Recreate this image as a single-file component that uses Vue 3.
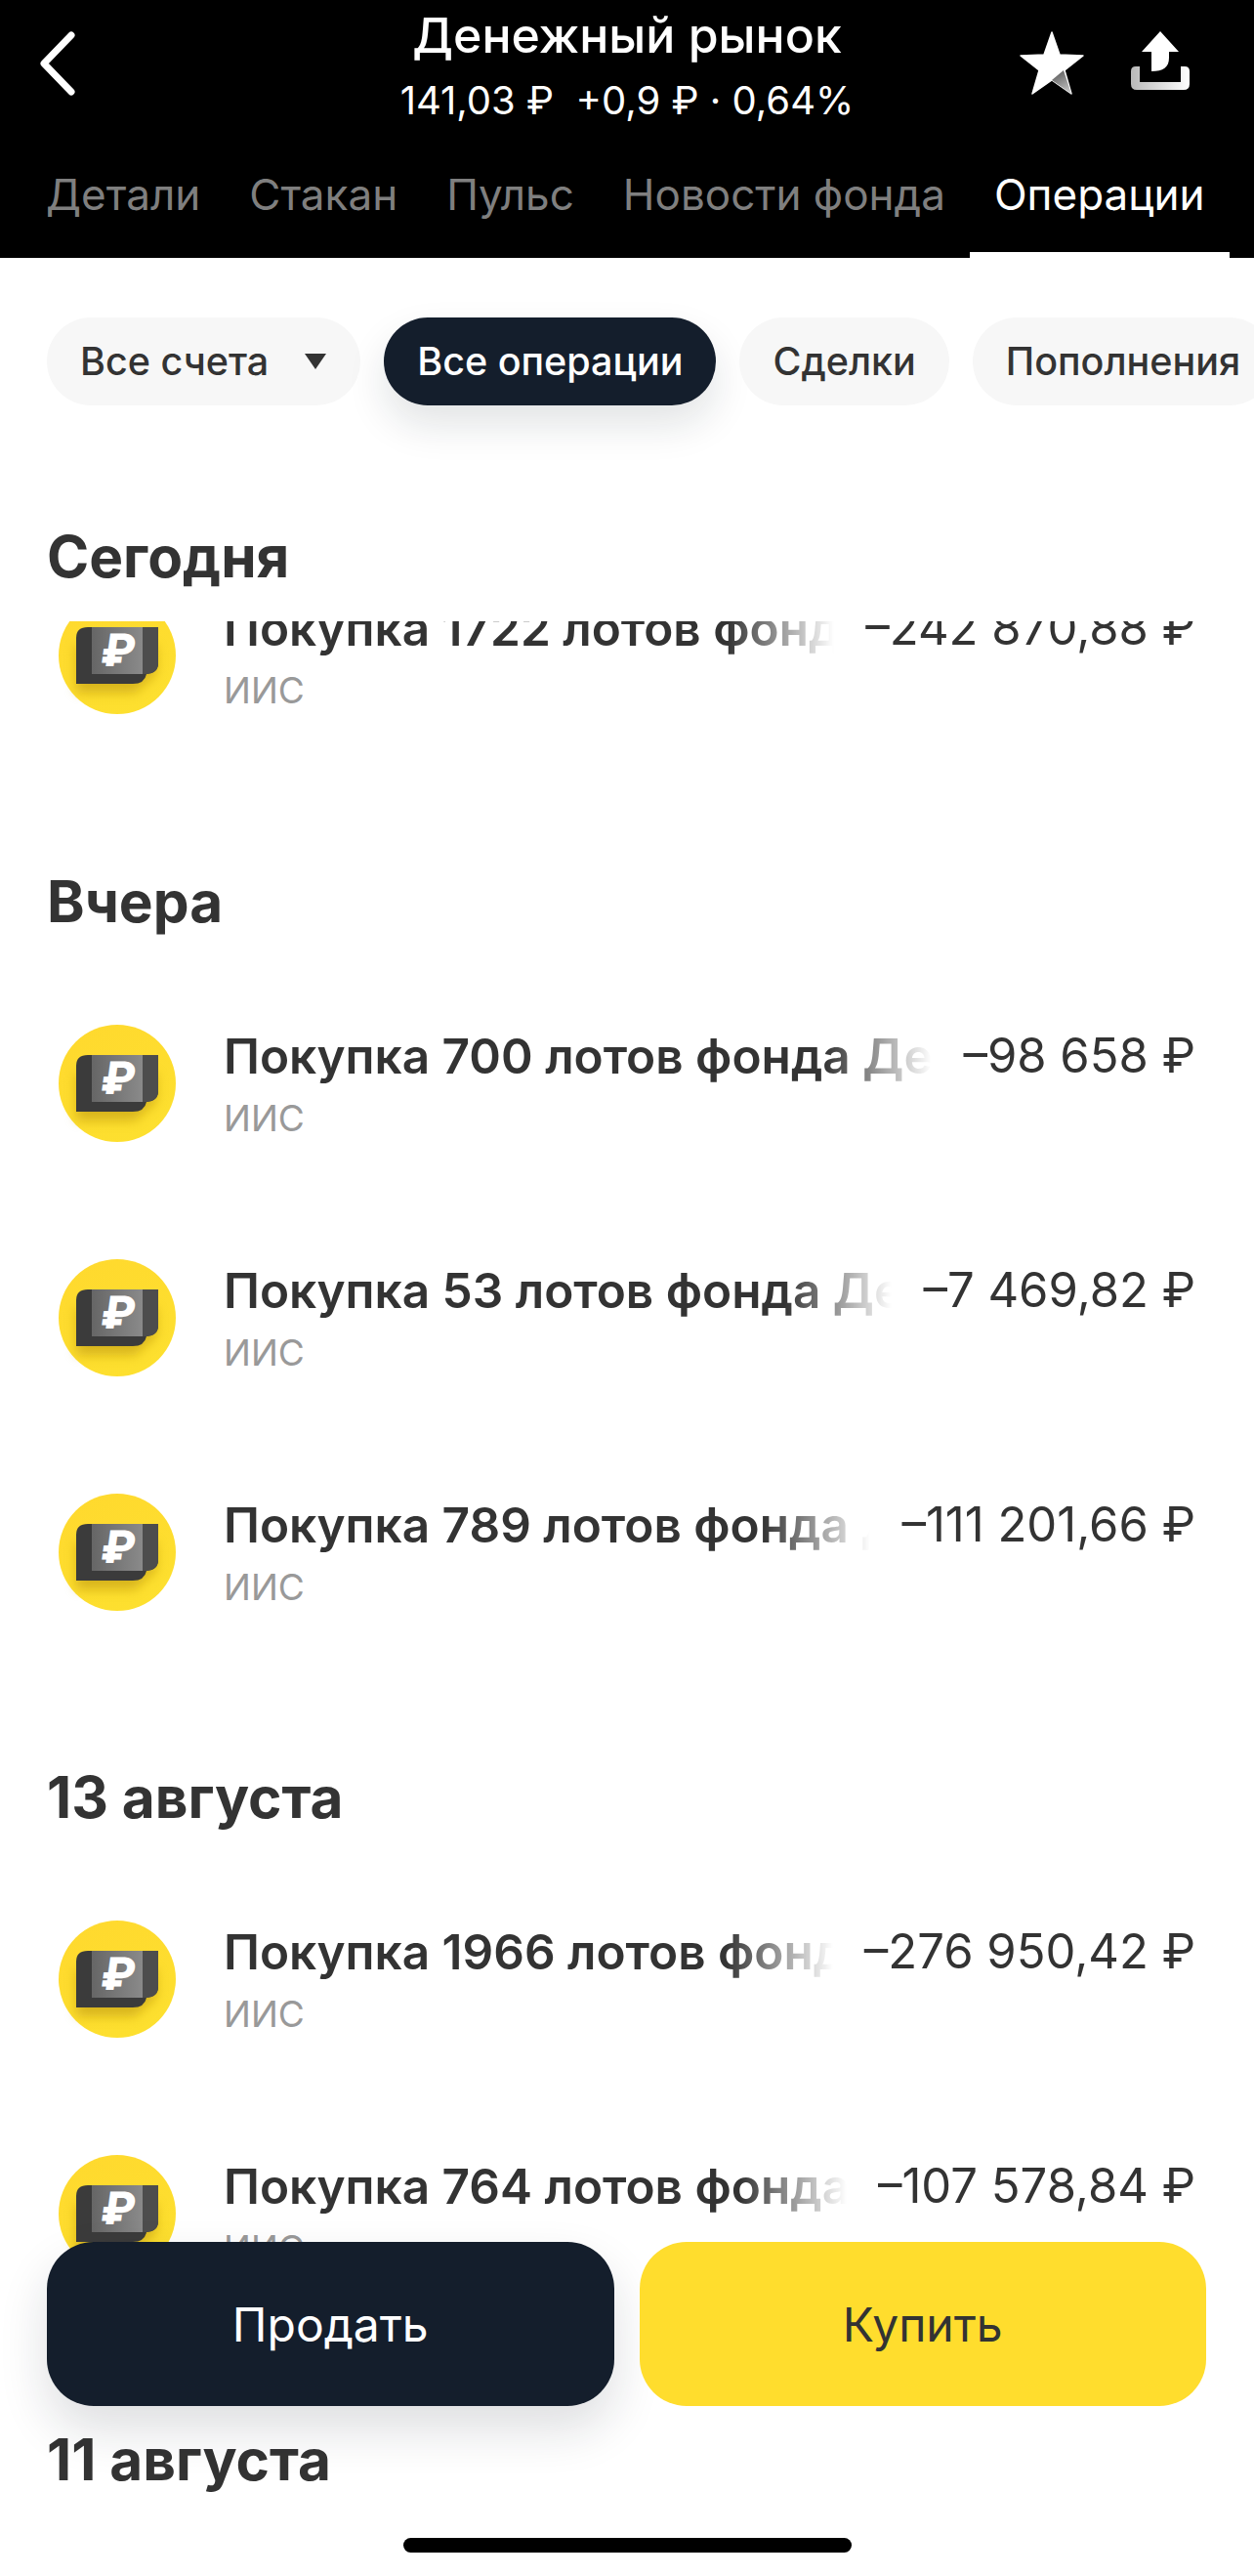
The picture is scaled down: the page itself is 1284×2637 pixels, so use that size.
<template>
  <div class="screen">
    <header class="top">
      <div class="top__bar">
        <button class="top__back" type="button" aria-label="Назад">
          <svg width="40" height="66" viewBox="0 0 40 66">
            <path d="M34 4 L6 33 L34 62" fill="none" stroke="#fff" stroke-width="7" stroke-linecap="round" stroke-linejoin="round" />
          </svg>
        </button>
        <div class="top__center">
          <div class="top__title">Денежный рынок</div>
          <div class="top__price">141,03 ₽&nbsp;&nbsp;+0,9 ₽ · 0,64%</div>
        </div>
        <div class="top__actions">
          <svg class="star" width="68" height="66" viewBox="0 0 68 66">
            <defs>
              <linearGradient id="star-tail" x1="0.3" y1="0" x2="0.8" y2="1">
                <stop offset="0" stop-color="#5c5c5c" />
                <stop offset="1" stop-color="#c8c8c8" />
              </linearGradient>
            </defs>
            <path d="M34 1 L42 24 L66 25 L47 40 L54 64 L34 50 L14 64 L21 40 L2 25 L26 24 Z" fill="#fff" stroke="#fff" stroke-width="1.5" stroke-linejoin="round" />
            <path d="M34 50 L46 40 L54 64 Z" fill="url(#star-tail)" />
          </svg>
          <svg class="share" width="62" height="62" viewBox="0 0 62 62">
            <defs>
              <linearGradient id="tray" x1="0" y1="0" x2="1" y2="0">
                <stop offset="0" stop-color="#b9b9b9" />
                <stop offset="1" stop-color="#fff" />
              </linearGradient>
            </defs>
            <path d="M31 0 L50 21 L40 21 L40 27 C40 37 34 41 22 41 L22 21 L12 21 Z" fill="#fff" />
            <path d="M1 41 Q1 36 6 36 L10 36 L10 52 L52 52 L52 36 L56 36 Q61 36 61 41 L61 54 Q61 60 55 60 L7 60 Q1 60 1 54 Z" fill="url(#tray)" />
          </svg>
        </div>
      </div>
      <nav class="tabs">
        <span
          v-for="tab in tabs"
          :key="tab"
          class="tabs__item"
          :class="{ 'tabs__item--active': tab === 'Операции' }"
        >{{ tab }}</span>
      </nav>
    </header>

    <div class="chips">
      <span class="chip">
        Все счета
        <svg class="chip__caret" width="24" height="18" viewBox="0 0 24 18"><path d="M1 1 H23 L12 17 Z" fill="#333" /></svg>
      </span>
      <span class="chip chip--active">Все операции</span>
      <span class="chip">Сделки</span>
      <span class="chip">Пополнения</span>
    </div>

    <main class="list">
      <section
        v-for="group in groups"
        :key="group.day"
        class="group"
        :class="{ 'group--scrolled': group.scrolled }"
      >
        <h2 class="group__day">{{ group.day }}</h2>
        <div class="group__rows">
          <div v-for="op in group.items" :key="op.lots" class="row">
            <svg class="row__icon" width="120" height="120" viewBox="0 0 120 120">
              <defs>
                <linearGradient id="coin" x1="0.2" y1="0" x2="0.7" y2="1">
                  <stop offset="0" stop-color="#ffd92e" />
                  <stop offset="1" stop-color="#fde02f" />
                </linearGradient>
                <linearGradient id="note" x1="0" y1="0" x2="1" y2="0">
                  <stop offset="0" stop-color="#666" />
                  <stop offset="1" stop-color="#8a8a8a" />
                </linearGradient>
                <filter id="drop" x="-30%" y="-30%" width="160%" height="180%">
                  <feGaussianBlur stdDeviation="6" />
                </filter>
              </defs>
              <circle cx="60" cy="60" r="60" fill="url(#coin)" />
              <path d="M18 50 H100 V78 L78 98 H18 Z" fill="#b8930f" opacity="0.55" filter="url(#drop)" />
              <path d="M18 42 Q18 31 30 31 H102 V68 Q102 78 90 79 Q88 89 76 89 H18 Z" fill="#3b3b3b" />
              <path d="M34 31 H102 V68 Q102 78 90 79 L34 79 Z" fill="#4d4d4d" />
              <rect x="34" y="31" width="52" height="48" fill="url(#note)" />
              <text x="60" y="71" class="row__sign" text-anchor="middle" transform="skewX(-8) translate(9 0)">₽</text>
            </svg>
            <div class="row__text">
              <div class="row__title">Покупка {{ op.lots }} лотов фонда Денежный рынок</div>
              <div class="row__account">ИИС</div>
            </div>
            <div class="row__sum">{{ op.sum }}</div>
          </div>
        </div>
      </section>
    </main>

    <div class="actions">
      <button class="actions__btn actions__btn--sell" type="button">Продать</button>
      <button class="actions__btn actions__btn--buy" type="button">Купить</button>
    </div>
    <div class="home-bar"></div>
  </div>
</template>

<script setup>
const tabs = ['Детали', 'Стакан', 'Пульс', 'Новости фонда', 'Операции']

const groups = [
  {
    day: 'Сегодня',
    scrolled: true,
    items: [{ lots: 1722, sum: '–242 870,88 ₽' }]
  },
  {
    day: 'Вчера',
    items: [
      { lots: 700, sum: '–98 658 ₽' },
      { lots: 53, sum: '–7 469,82 ₽' },
      { lots: 789, sum: '–111 201,66 ₽' }
    ]
  },
  {
    day: '13 августа',
    items: [
      { lots: 1966, sum: '–276 950,42 ₽' },
      { lots: 764, sum: '–107 578,84 ₽' }
    ]
  },
  { day: '11 августа', items: [] }
]
</script>

<style>
html,
body {
  margin: 0;
  background: #fff;
}
</style>

<style scoped>
.screen {
  position: relative;
  height: 2637px;
  overflow: hidden;
  background: #fff;
  color: #333;
  font-family: Inter, "Liberation Sans", sans-serif;
}

.top {
  height: 264px;
  background: #000;
  color: #fff;
  display: flex;
  flex-direction: column;
}

.top__bar {
  display: grid;
  grid-template-columns: 1fr auto 1fr;
  height: 166px;
  padding: 0 65px;
}

.top__back {
  justify-self: start;
  align-self: start;
  margin: 32px 0 0 -26px;
  padding: 0;
  border: 0;
  background: none;
}

.top__center {
  text-align: center;
  padding-top: 6px;
}

.top__title {
  font-size: 50px;
  line-height: 60px;
  font-weight: 500;
}

.top__price {
  margin-top: 14px;
  font-size: 40px;
  line-height: 46px;
  font-weight: 400;
}

.top__actions {
  justify-self: end;
  display: flex;
  align-items: flex-start;
  gap: 46px;
  padding-top: 32px;
}

.tabs {
  display: flex;
  padding-left: 22px;
  height: 98px;
}

.tabs__item {
  padding: 0 25px;
  font-size: 44px;
  line-height: 66px;
  color: #7f7f7f;
  white-space: nowrap;
  box-sizing: border-box;
  height: 98px;
}

.tabs__item--active {
  color: #fff;
  border-bottom: 6px solid #fff;
}

.chips {
  display: flex;
  gap: 24px;
  padding: 61px 0 0 48px;
  white-space: nowrap;
}

.chip {
  flex: none;
  display: flex;
  align-items: center;
  gap: 36px;
  height: 90px;
  padding: 0 34px;
  border-radius: 45px;
  background: #f7f7f7;
  font-size: 39.5px;
  font-weight: 500;
}

.chip--active {
  background: #141e2c;
  color: #fff;
  box-shadow: 0 20px 40px rgba(20, 30, 44, 0.12);
}

.list {
  padding: 115px 60px 0 48px;
}

.group {
  margin-bottom: 91.5px;
}

.group--scrolled .group__rows {
  overflow: hidden;
}

.group--scrolled .row {
  margin-top: -85px;
}

.group__day {
  margin: 0 0 26px;
  font-size: 58.5px;
  line-height: 80px;
  font-weight: 700;
}

.row {
  display: flex;
  align-items: flex-start;
  height: 240px;
  padding: 60px 0;
  box-sizing: border-box;
}

.row__icon {
  flex: none;
  margin: 0 49px 0 12px;
}

.row__sign {
  fill: #fff;
  font-size: 46px;
  font-weight: 800;
}

.row__text {
  flex: 1;
  min-width: 0;
  padding-top: 2px;
}

.row__title {
  overflow: hidden;
  font-size: 49.5px;
  line-height: 60px;
  font-weight: 600;
  white-space: nowrap;
  -webkit-mask-image: linear-gradient(to left, transparent, #000 110px);
  mask-image: linear-gradient(to left, transparent, #000 110px);
}

.row__account {
  margin-top: 12px;
  font-size: 37px;
  line-height: 44px;
  color: #999;
}

.row__sum {
  flex: none;
  margin-left: 32px;
  padding-top: 2px;
  font-size: 49px;
  line-height: 60px;
  white-space: nowrap;
}

.actions {
  position: absolute;
  left: 48px;
  right: 49px;
  top: 2295px;
  display: flex;
  gap: 26px;
}

.actions__btn {
  flex: 1;
  height: 168px;
  border: 0;
  border-radius: 48px;
  font-family: inherit;
  font-size: 48px;
}

.actions__btn--sell {
  background: #141e2c;
  color: #fff;
  box-shadow: 0 24px 50px rgba(20, 30, 44, 0.14);
}

.actions__btn--buy {
  background: #ffdd2d;
  color: #333;
}

.home-bar {
  position: absolute;
  left: 413px;
  top: 2598px;
  width: 459px;
  height: 15px;
  border-radius: 8px;
  background: #000;
}
</style>
